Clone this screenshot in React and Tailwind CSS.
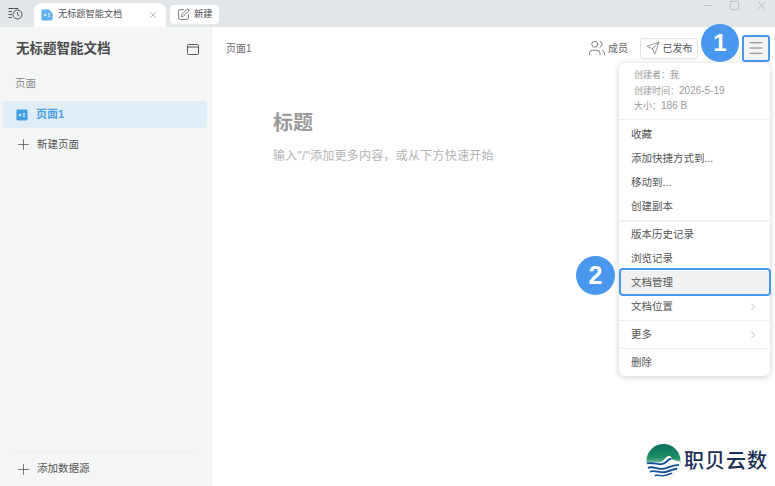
import React from 'react';
import { X, Minus, Square, Plus, ChevronRight, Menu, Send, Users, SquarePen } from 'lucide-react';

const FONT = "font-['Liberation_Sans','Noto_Sans_CJK_SC',sans-serif]";

function DocIcon({ size = 13, color = '#3f9ee6', fold }) {
  return (
    <svg width={size} height={size} viewBox="0 0 13 13" className="shrink-0">
      {fold ? (
        <path d="M2 .5h6.5L12.5 4.5V11a1.5 1.5 0 0 1-1.5 1.5H2A1.5 1.5 0 0 1 .5 11V2A1.5 1.5 0 0 1 2 .5z" fill={color} />
      ) : (
        <rect x="0.5" y="0.5" width="12" height="12" rx="1.5" fill={color} />
      )}
      <path d="M3 6.5h3M4.5 5v3" stroke="#fff" strokeWidth="1" />
      <path d="M7.5 5h2.2M7.5 6.5h2.2M7.5 8h2.2" stroke="#fff" strokeWidth="0.9" />
    </svg>
  );
}

function HistoryIcon() {
  return (
    <svg width="15" height="13" viewBox="0 0 15 13" fill="none" stroke="#555" strokeWidth="1" className="shrink-0">
      <path d="M0.5 1.5h10M0.5 4.5h3.5M0.5 7.5h3.5M0.5 10.5h3.5" />
      <circle cx="9.5" cy="7.5" r="4.5" />
      <path d="M9.5 5v2.7l1.8 1" />
    </svg>
  );
}

function Logo() {
  return (
    <svg width="35" height="36" viewBox="0 0 36 36" className="shrink-0">
      <defs>
        <linearGradient id="sky" x1="0" y1="0" x2="0" y2="1">
          <stop offset="0" stopColor="#0b6f62" />
          <stop offset="0.4" stopColor="#1f8f66" />
          <stop offset="0.62" stopColor="#9fd0b2" />
        </linearGradient>
      </defs>
      <circle cx="18" cy="18" r="17.5" fill="url(#sky)" />
      <path d="M0.6 20c6-3 10 1 15-1 4-2 5-7 9-6 2 .6 2 2 1 3 3 1 6 2 9.8 2.5C35 28 27 35.5 18 35.5S0.6 29 0.6 20z" fill="#fff" />
      <path d="M1 20.5c7-2 11 2 16 .5s6-6 9-5" fill="none" stroke="#14539a" strokeWidth="2" />
      <path d="M2 25c6-2 10 2 16 1s9-4 16-4" fill="none" stroke="#14539a" strokeWidth="2" />
      <path d="M4 29c5-2 9 1 14 .5s9-3 14-3.5" fill="none" stroke="#14539a" strokeWidth="2" />
      <path d="M9 33c4-1 7 .5 10 0s6-2 8-2.5" fill="none" stroke="#14539a" strokeWidth="1.6" />
    </svg>
  );
}

function MenuRow({ label, arrow, active, tall }) {
  return (
    <div className={`flex items-center justify-between pl-3 pr-[11px] text-[10.5px] text-[#555] ${tall ? 'h-[25px]' : 'h-6'} ${active ? 'bg-[#f0f2f2]' : ''}`}>
      <span>{label}</span>
      {arrow && <ChevronRight size={12} strokeWidth={1.2} className="text-[#999]" />}
    </div>
  );
}

export default function App() {
  return (
    <div className={`relative flex h-[486px] w-[775px] flex-col overflow-hidden bg-white ${FONT}`}>
      {/* title bar */}
      <div className="flex h-[27px] shrink-0 items-end bg-[#e3e6e9]">
        <div className="flex h-full w-[34px] items-center justify-center pr-[3px]">
          <HistoryIcon />
        </div>
        <div className="flex h-6 w-[132px] items-center rounded-t-lg bg-white pl-[7px] pr-2">
          <DocIcon size={12} color="#5cb0ee" fold />
          <span className="ml-[5px] flex-1 text-[9.2px] text-[#555]">无标题智能文档</span>
          <X size={10} strokeWidth={1.3} className="text-[#777]" />
        </div>
        <div className="mb-[3px] ml-[4px] flex h-[19px] w-[49px] items-center gap-[4px] rounded-[4px] bg-white pl-[7px]">
          <SquarePen size={13} strokeWidth={1.2} className="text-[#333]" />
          <span className="text-[9.2px] text-[#444]">新建</span>
        </div>
        <div className="mb-[15px] ml-auto flex items-center gap-[15px] pr-[7px] text-[#9a9a9a]">
          <Minus size={13} strokeWidth={1} />
          <Square size={11} strokeWidth={1.1} />
          <X size={13} strokeWidth={1} />
        </div>
      </div>

      <div className="flex min-h-0 flex-1">
        {/* sidebar */}
        <div className="flex w-[212px] shrink-0 flex-col border-r border-[#e9ebeb] bg-[#f5f7f7]">
          <div className="flex h-[44px] items-center justify-between pl-4 pr-3 pt-[1px]">
            <span className="text-[13.5px] font-bold text-[#4a4a4a]">无标题智能文档</span>
            <svg width="12" height="11" viewBox="0 0 12 11" fill="none" stroke="#555" strokeWidth="1">
              <rect x="0.5" y="0.5" width="11" height="10" rx="1" />
              <path d="M0.5 3h11" />
            </svg>
          </div>
          <div className="mt-[4px] pl-[15px] text-[10.5px] leading-4 text-[#888]">页面</div>
          <div className="mx-[3px] mt-[10px] flex h-[27px] w-[204px] items-center rounded-[3px] bg-[#e1edf6] pl-[13px]">
            <DocIcon size={12} />
            <span className="ml-2 text-[11px] font-bold text-[#4a9fe0]">页面1</span>
          </div>
          <div className="mt-[3px] flex h-[27px] items-center pl-[15px] text-[10.5px] text-[#555]">
            <Plus size={17} strokeWidth={0.9} className="text-[#333]" />
            <span className="ml-[5px]">新建页面</span>
          </div>
          <div className="mx-[14px] mt-auto border-t border-[#eceeee]" />
          <div className="flex h-[34px] items-center pl-[15px] text-[10.5px] text-[#555]">
            <Plus size={17} strokeWidth={0.9} className="text-[#333]" />
            <span className="ml-[5px]">添加数据源</span>
          </div>
        </div>

        {/* document */}
        <div className="flex min-w-0 flex-1 flex-col">
          <div className="flex h-[42px] items-center justify-between pl-[14px] pr-[5px]">
            <span className="text-[10px] text-[#666]">页面1</span>
            <div className="flex items-center">
              <Users size={18} strokeWidth={1} className="text-[#555]" />
              <span className="ml-[2px] text-[10px] text-[#666]">成员</span>
              <div className="ml-[12px] flex h-[21px] w-[58px] items-center justify-center gap-[3px] rounded-[3px] border border-[#e3e3e3] text-[10px] text-[#555]">
                <Send size={14} strokeWidth={1} />
                已发布
              </div>
              <div className="ml-[44px] flex h-[27px] w-[28px] items-center justify-center rounded-[3px] border-2 border-[#4a98ee] bg-[#f1f2f2]">
                <Menu size={18} strokeWidth={0.9} className="text-[#444]" />
              </div>
            </div>
          </div>
          <div className="pl-[61px] pt-[40px]">
            <div className="text-[20px] font-bold leading-[28px] text-[#9a9a9a]">标题</div>
            <div className="mt-[10px] text-[12px] tracking-[0.25px] text-[#b3b3b3]">输入"/"添加更多内容，或从下方快速开始</div>
          </div>
        </div>
      </div>

      {/* dropdown menu */}
      <div className="absolute left-[619px] top-[63px] w-[151px] rounded-md bg-white shadow-[0_1px_6px_rgba(0,0,0,0.2)]">
        <div className="border-b border-[#efefef] pb-[6px] pl-[15px] pt-[5px] text-[9px] leading-[15px] text-[#999]">
          <div className="h-[15px]">创建者：我</div>
          <div className="h-[15px]">创建时间：<span className="text-[10px]">2026-5-19</span></div>
          <div className="h-[15px]">大小：<span className="text-[10px]">186 B</span></div>
        </div>
        <div className="border-b-2 border-[#f3f3f3] pb-[1px] pt-[2px]">
          <MenuRow label="收藏" tall />
          <MenuRow label="添加快捷方式到..." />
          <MenuRow label="移动到..." />
          <MenuRow label="创建副本" />
        </div>
        <div className="border-b border-[#efefef] pb-[1px] pt-[1px]">
          <MenuRow label="版本历史记录" />
          <MenuRow label="浏览记录" />
          <MenuRow label="文档管理" active />
          <MenuRow label="文档位置" arrow />
        </div>
        <div className="border-b border-[#efefef] pb-[1px] pt-[2px]">
          <MenuRow label="更多" arrow />
        </div>
        <div className="pb-[1px] pt-[2px]">
          <MenuRow label="删除" />
        </div>
      </div>

      {/* tutorial highlight */}
      <div className="absolute left-[619px] top-[268px] h-[28px] w-[152px] rounded-[4px] border-2 border-[#4a98ee]" />
      <div className="absolute left-[701px] top-[24px] flex h-[38px] w-[38px] items-center justify-center rounded-full bg-[#4a98ee] text-[24px] font-bold text-white">1</div>
      <div className="absolute left-[576px] top-[256px] flex h-[39px] w-[39px] items-center justify-center rounded-full bg-[#4a98ee] text-[25px] font-bold text-white">2</div>

      {/* watermark */}
      <div className="absolute left-[646px] top-[443px] flex items-center">
        <Logo />
        <span className="ml-[3px] text-[20px] font-medium leading-[36px] tracking-[1px] text-[#1a2f55]">职贝云数</span>
      </div>
    </div>
  );
}
